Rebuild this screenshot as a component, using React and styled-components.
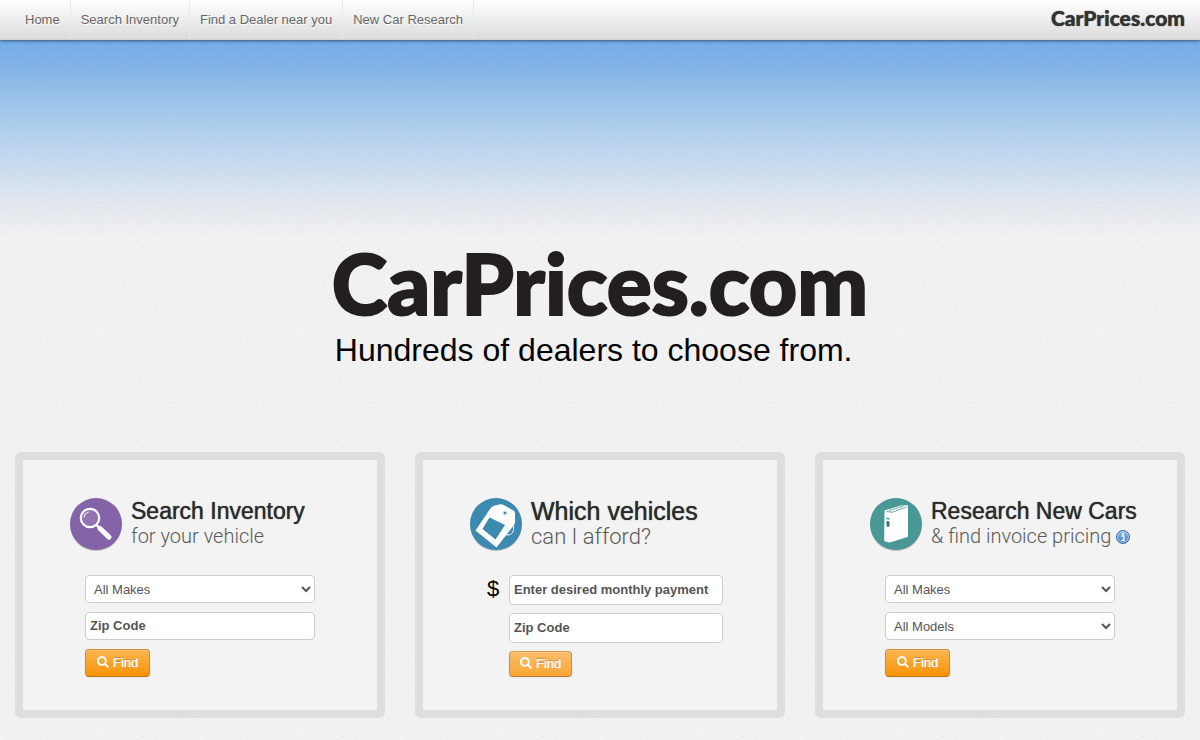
import React from "react";
import styled, { createGlobalStyle } from "styled-components";
import { FaSearch } from "react-icons/fa";

const grain =
  "url(\"data:image/svg+xml,%3Csvg xmlns='http://www.w3.org/2000/svg' width='200' height='200'%3E%3Cfilter id='n'%3E%3CfeTurbulence type='fractalNoise' baseFrequency='.45' numOctaves='3' stitchTiles='stitch'/%3E%3CfeColorMatrix values='0 0 0 0 .5 0 0 0 0 .5 0 0 0 0 .5 .26 0 0 0 -.095'/%3E%3C/filter%3E%3Crect width='200' height='200' filter='url(%23n)'/%3E%3C/svg%3E\")";

const GlobalStyle = createGlobalStyle`
  *, *::before, *::after { box-sizing: border-box; }
  body {
    margin: 0;
    min-height: 100vh;
    font-family: "Liberation Sans", Arial, sans-serif;
    font-size: 13px;
    line-height: 18px;
    color: #555;
    background-color: #f2f2f2;
    background-image: ${grain},
      linear-gradient(#70abea 40px, #82b4e9 70px, #a2c8ec 110px, #c5daf0 160px, #e2e8f0 200px, #f3f3f3 240px);
  }
`;

const NavBar = styled.header`
  display: flex;
  justify-content: space-between;
  align-items: center;
  height: 40px;
  padding: 0 15px;
  background: linear-gradient(#ffffff, #dcdcdc);
  border-bottom: 1px solid #d4d4d4;
  box-shadow: 0 1px 3px rgba(0, 0, 0, 0.5);
`;

const NavLinks = styled.nav`
  display: flex;
  align-self: stretch;
`;

const NavLink = styled.a`
  padding: 11px 10px 10px;
  border-right: 1px solid #e9e9e9;
  color: #666;
  text-decoration: none;
  text-shadow: 0 1px 0 #fff;
`;

const Brand = styled.a`
  font-family: Lato, "Liberation Sans", sans-serif;
  font-weight: 900;
  font-size: 21px;
  line-height: 36px;
  height: 39px;
  color: #333;
  text-decoration: none;
  text-shadow: 0 0 1px #333;
`;

const Hero = styled.section`
  display: flex;
  justify-content: center;
  padding: 193px 15px 84px;
`;

const Title = styled.h1`
  margin: 0;
  font-family: Lato, "Liberation Sans", sans-serif;
  font-weight: 900;
  font-size: 84px;
  line-height: 99px;
  color: #231f20;
  -webkit-text-stroke: 2px #231f20;
`;

const Tagline = styled.p`
  margin: 0;
  padding: 0 3px;
  font-size: 32px;
  line-height: 36px;
  color: #000;
`;

const Cards = styled.main`
  display: grid;
  grid-template-columns: repeat(3, 1fr);
  gap: 30px;
  padding: 0 15px 22px;
`;

const Card = styled.section`
  padding: 36px 0 33px 46px;
  border: 8px solid #dedede;
  border-radius: 6px;
  background: #f3f3f3;
`;

const CardHead = styled.div`
  display: flex;
  align-items: flex-start;
  gap: 8px;
  height: 79px;
  svg { flex: none; }
`;

const CardTitle = styled.h2`
  margin: 0;
  padding-top: 2px;
  font-weight: 400;
  font-size: ${(p) => (p.$large ? 25 : 23)}px;
  line-height: 26px;
  color: #2b2b2b;
  text-shadow: 0 0 1px #2b2b2b;
  white-space: nowrap;
`;

const CardSub = styled.p`
  display: flex;
  align-items: center;
  gap: 5px;
  margin: 0;
  font-family: Roboto, "Liberation Sans", sans-serif;
  font-weight: 300;
  font-size: ${(p) => (p.$large ? 22 : 20)}px;
  line-height: 25px;
  color: #5a5a5a;
  white-space: nowrap;
`;

const Form = styled.form`
  display: grid;
  grid-template-columns: ${(p) => (p.$wide ? "12px 214px" : "230px")};
  column-gap: 10px;
  row-gap: ${(p) => (p.$wide ? 8 : 9)}px;
  padding-left: ${(p) => (p.$wide ? 18 : 16)}px;
  justify-items: start;
`;

const fieldColumn = (p) => (p.$offset ? "grid-column: 2;" : "");

const Select = styled.select`
  width: 100%;
  height: 28px;
  padding: 4px;
  border: 1px solid #ccc;
  border-radius: 4px;
  background-color: #fff;
  color: #555;
  font: 13px "Liberation Sans", Arial, sans-serif;
`;

const Input = styled.input`
  ${fieldColumn}
  width: 100%;
  height: ${(p) => (p.$offset ? 30 : 28)}px;
  padding: 4px 4px 6px;
  border: 1px solid #ccc;
  border-radius: 4px;
  background: #fff;
  color: #555;
  font: bold 13px "Liberation Sans", Arial, sans-serif;
  &::placeholder { color: #555; opacity: 1; }
`;

const Dollar = styled.label`
  font-size: 22px;
  line-height: 28px;
  color: #000;
`;

const FindButton = styled.button`
  ${fieldColumn}
  display: flex;
  align-items: center;
  gap: 4px;
  height: ${(p) => (p.$offset ? 26 : 28)}px;
  padding: 0 ${(p) => (p.$offset ? 10 : 11)}px 2px;
  border: 1px solid;
  border-color: ${(p) => (p.$offset ? "#d69a4a #c98f3f #b5803a" : "#d98d2c #d08a2c #b7741c")};
  border-radius: 4px;
  background: ${(p) => (p.$offset ? "linear-gradient(#fbbd6c, #f9a634)" : "linear-gradient(#fbb450, #f89406)")};
  box-shadow: inset 0 1px 0 rgba(255, 255, 255, 0.2), 0 1px 2px rgba(0, 0, 0, 0.05);
  color: #fff;
  font: 13px "Liberation Sans", Arial, sans-serif;
  text-shadow: 0 -1px 0 rgba(0, 0, 0, 0.25), 0 0 1px #fff;
`;

function Find({ offset }) {
  return (
    <FindButton type="button" $offset={offset}>
      <FaSearch size={12} aria-hidden="true" />
      Find
    </FindButton>
  );
}

function Disc({ color, children }) {
  return (
    <svg width="54" height="58" viewBox="0 0 54 58" aria-hidden="true">
      <circle cx="27" cy="29" r="26" fill="#000" opacity=".22" />
      <circle cx="27" cy="28" r="26" fill={color} />
      {children}
    </svg>
  );
}

const SearchDisc = () => (
  <Disc color="#8463a8">
    <circle cx="21" cy="22" r="9.2" fill="#9274b3" stroke="#fff" strokeWidth="2.2" />
    <path d="M14.8 21.5a6.5 6.5 0 0 1 5-5.5" fill="none" stroke="#fff" strokeWidth="1" />
    <path d="M27.5 29l3 3" stroke="#fff" strokeWidth="2.4" />
    <path d="M31 32.5l9 8.6" stroke="#fff" strokeWidth="5" strokeLinecap="round" />
  </Disc>
);

const TagDisc = () => (
  <Disc color="#3b8ab0">
    <path
      fillRule="evenodd"
      d="M6.500 34.500L21 13q1.500-2.500 4-3.200l6-1.500q2-.300 3.500.700l10 5.500q1.500 1 1.500 3v8q0 2-1 3.500L27.500 51.500zM20.500 21.500L13.500 33 26.500 43.500 36 29z"
      fill="#fff"
    />
    <path d="M20.500 22L15 31.500 26.500 40.500 34.500 29z" fill="#3b8ab0" />
    <circle cx="36" cy="17" r="2.6" fill="#d7e8ef" />
    <circle cx="36" cy="17" r="1.300" fill="#3b8ab0" />
    <path d="M44 28c2 7-1 11-5 11-2 0-3-1-4-2" fill="none" stroke="#fff" strokeWidth="1" />
  </Disc>
);

const BookDisc = () => (
  <Disc color="#4a9896">
    <path d="M15.500 14.500L32 9.500l6.500-.300.500 1v30.500L21 46.500q-5-.500-5.800-2z" fill="#fff" />
    <path d="M17.500 15.500l6 .700L37.500 11M20 14.500L34.500 10" fill="none" stroke="#4a9896" strokeWidth=".8" />
    <path d="M17 21.500l3.500.800v1.500l-3.500-.800z" fill="#4a9896" />
    <path d="M17.500 25l3 .5v5l-2 .500q-1-1-1-3z" fill="#39716f" />
  </Disc>
);

const InfoIcon = () => (
  <svg width="14" height="14" viewBox="0 0 14 14" role="img" aria-label="Info">
    <defs>
      <linearGradient id="infoFill" x1="0" y1="0" x2="0" y2="1">
        <stop offset="0" stopColor="#8fb9e8" />
        <stop offset="1" stopColor="#3d7cc9" />
      </linearGradient>
    </defs>
    <circle cx="7" cy="7" r="6.500" fill="url(#infoFill)" stroke="#3c66a6" />
    <circle cx="7" cy="7" r="5.400" fill="none" stroke="#c5dbf3" strokeWidth=".8" />
    <circle cx="7" cy="3.800" r="1.100" fill="#fff" />
    <path d="M5.500 6h2.300v4M5.300 10.300h3.600" fill="none" stroke="#fff" strokeWidth="1.300" />
  </svg>
);

const links = ["Home", "Search Inventory", "Find a Dealer near you", "New Car Research"];

export default function App() {
  return (
    <>
      <GlobalStyle />
      <NavBar>
        <NavLinks>
          {links.map((text) => (
            <NavLink href="#" key={text}>{text}</NavLink>
          ))}
        </NavLinks>
        <Brand href="#">CarPrices.com</Brand>
      </NavBar>
      <Hero>
        <div>
          <Title>CarPrices.com</Title>
          <Tagline>Hundreds of dealers to choose from.</Tagline>
        </div>
      </Hero>
      <Cards>
        <Card>
          <CardHead>
            <SearchDisc />
            <div>
              <CardTitle>Search Inventory</CardTitle>
              <CardSub>for your vehicle</CardSub>
            </div>
          </CardHead>
          <Form>
            <Select aria-label="Make"><option>All Makes</option></Select>
            <Input aria-label="Zip Code" placeholder="Zip Code" />
            <Find />
          </Form>
        </Card>
        <Card>
          <CardHead>
            <TagDisc />
            <div>
              <CardTitle $large>Which vehicles</CardTitle>
              <CardSub $large>can I afford?</CardSub>
            </div>
          </CardHead>
          <Form $wide>
            <Dollar htmlFor="payment">$</Dollar>
            <Input $offset id="payment" placeholder="Enter desired monthly payment" />
            <Input $offset aria-label="Zip Code" placeholder="Zip Code" />
            <Find offset />
          </Form>
        </Card>
        <Card>
          <CardHead>
            <BookDisc />
            <div>
              <CardTitle>Research New Cars</CardTitle>
              <CardSub>&amp; find invoice pricing <InfoIcon /></CardSub>
            </div>
          </CardHead>
          <Form>
            <Select aria-label="Make"><option>All Makes</option></Select>
            <Select aria-label="Model"><option>All Models</option></Select>
            <Find />
          </Form>
        </Card>
      </Cards>
    </>
  );
}
